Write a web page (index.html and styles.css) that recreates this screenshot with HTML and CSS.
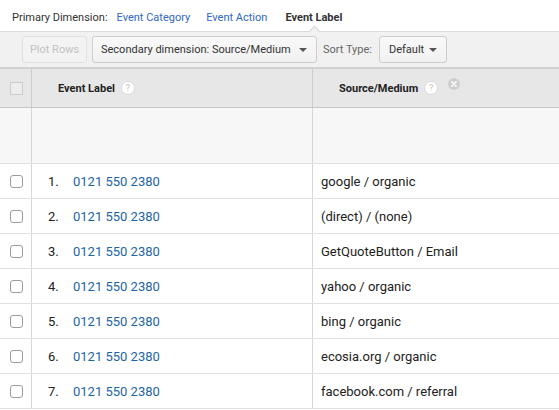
FILE: index.html
```html
<!DOCTYPE html>
<html>
<head>
<meta charset="utf-8">
<link rel="stylesheet" href="styles.css">
</head>
<body>
<div class="topbar">
  <span class="pd-label">Primary Dimension:</span>
  <a class="pd-link first">Event Category</a>
  <a class="pd-link">Event Action</a>
  <span class="pd-active">Event Label</span>
</div>
<div class="toolbar">
  <button class="btn disabled">Plot Rows</button>
  <button class="btn select">Secondary dimension: Source/Medium <span class="caret"></span></button>
  <span class="sort-label">Sort Type:</span>
  <button class="btn select sort">Default <span class="caret"></span></button>
</div>
<div class="table">
  <div class="row head">
    <div class="cell chk"><span class="hbox"></span></div>
    <div class="cell c1"><span class="htext">Event Label</span><span class="help">?</span></div>
    <div class="cell c2"><span class="htext">Source/Medium</span><span class="help">?</span><span class="remove"><svg width="12" height="12" viewBox="0 0 12 12"><circle cx="6" cy="6" r="6" fill="#cfcfcf"/><path d="M3.8 3.8 L8.2 8.2 M8.2 3.8 L3.8 8.2" stroke="#fff" stroke-width="1.4" stroke-linecap="round"/></svg></span></div>
  </div>
  <div class="row totals">
    <div class="cell chk"></div>
    <div class="cell c1"></div>
    <div class="cell c2"></div>
  </div>
  <div class="row data">
    <div class="cell chk"><span class="cbox"></span></div>
    <div class="cell c1"><span class="num">1.</span><a class="lnk">0121 550 2380</a></div>
    <div class="cell c2">google / organic</div>
  </div>
  <div class="row data">
    <div class="cell chk"><span class="cbox"></span></div>
    <div class="cell c1"><span class="num">2.</span><a class="lnk">0121 550 2380</a></div>
    <div class="cell c2">(direct) / (none)</div>
  </div>
  <div class="row data">
    <div class="cell chk"><span class="cbox"></span></div>
    <div class="cell c1"><span class="num">3.</span><a class="lnk">0121 550 2380</a></div>
    <div class="cell c2">GetQuoteButton / Email</div>
  </div>
  <div class="row data">
    <div class="cell chk"><span class="cbox"></span></div>
    <div class="cell c1"><span class="num">4.</span><a class="lnk">0121 550 2380</a></div>
    <div class="cell c2">yahoo / organic</div>
  </div>
  <div class="row data">
    <div class="cell chk"><span class="cbox"></span></div>
    <div class="cell c1"><span class="num">5.</span><a class="lnk">0121 550 2380</a></div>
    <div class="cell c2">bing / organic</div>
  </div>
  <div class="row data">
    <div class="cell chk"><span class="cbox"></span></div>
    <div class="cell c1"><span class="num">6.</span><a class="lnk">0121 550 2380</a></div>
    <div class="cell c2">ecosia.org / organic</div>
  </div>
  <div class="row data">
    <div class="cell chk"><span class="cbox"></span></div>
    <div class="cell c1"><span class="num">7.</span><a class="lnk">0121 550 2380</a></div>
    <div class="cell c2">facebook.com / referral</div>
  </div>
</div>
</body>
</html>
```
FILE: styles.css
```css
* { box-sizing: border-box; }
html, body { margin: 0; padding: 0; background: #fff; }
body {
  font-family: Roboto, "Liberation Sans", Arial, sans-serif;
  color: #222;
  width: 559px;
  overflow: hidden;
}

.topbar {
  height: 31px;
  padding: 6px 0 0 12px;
  display: flex;
  align-items: flex-start;
  font-size: 11px;
  line-height: 24px;
  position: relative;
}
.pd-label { color: #333; margin-right: 8px; }
.pd-link { color: #2f68c8; margin-right: 16px; }
.pd-link.first { margin-left: 1px; }
.pd-active { color: #333; font-weight: bold; margin-left: 2px; position: relative; }
.pd-active::after {
  content: "";
  position: absolute;
  left: 50%;
  bottom: -4px;
  width: 6px;
  height: 6px;
  margin-left: -3px;
  background: #f1f1f1;
  border-left: 1px solid #d8d8d8;
  border-top: 1px solid #d8d8d8;
  transform: rotate(45deg);
  z-index: 2;
}

.toolbar {
  height: 37px;
  background: #f1f1f1;
  border-top: 1px solid #dcdcdc;
  border-bottom: 1px solid #d3d3d3;
  padding: 4px 0 0 22px;
  display: flex;
  align-items: flex-start;
  font-size: 11px;
}
.btn {
  height: 27px;
  border: 1px solid #cdcdcd;
  border-radius: 3px;
  background: linear-gradient(#f9f9f9, #f1f1f1);
  font-family: inherit;
  font-size: 11px;
  color: #333;
  padding: 0 8px;
  display: flex;
  align-items: center;
  white-space: nowrap;
}
.btn.disabled {
  width: 65px;
  justify-content: center;
  color: #c2c2c2;
  border-color: #e0e0e0;
  background: #f3f3f3;
  margin-right: 5px;
  padding: 0;
}
.btn.select { width: 225px; padding-left: 8px; }
.btn.sort { width: 68px; padding-left: 9px; }
.caret {
  display: inline-block;
  width: 0; height: 0;
  border-left: 4px solid transparent;
  border-right: 4px solid transparent;
  border-top: 4px solid #555;
  margin-left: auto;
  margin-right: 1px;
}
.sort-label {
  color: #666;
  line-height: 27px;
  margin: 0 7px 0 6px;
}

.table { font-size: 13px; }
.row {
  display: grid;
  grid-template-columns: 32px 281px 1fr;
}
.cell {
  border-right: 1px solid #d6d6d6;
  display: flex;
  align-items: center;
}
.cell.c2 { border-right: none; }

.row.head {
  height: 40px;
  background: #e7e7e7;
  border-top: 1px solid #d0d0d0;
  border-bottom: 1px solid #c6c6c6;
}
.row.head .cell { border-right-color: #cbcbcb; }
.hbox {
  width: 13px; height: 13px;
  margin-left: 10px;
  background: #ededed;
  border: 1px solid #cdcdcd;
}
.htext {
  font-size: 11px;
  font-weight: bold;
  color: #222;
}
.row.head .c1 { padding-left: 26px; }
.row.head .c2 { padding-left: 26px; }
.help {
  width: 14px; height: 14px;
  border-radius: 50%;
  background: #fff;
  border: 1px solid #dadada;
  color: #c0c0c0;
  font-size: 9px;
  line-height: 12px;
  text-align: center;
  margin-left: 6px;
}
.remove {
  display: flex;
  margin-left: 10px;
  margin-top: -8px;
}

.row.totals {
  height: 56px;
  background: #f7f7f7;
  border-bottom: 1px solid #e0e0e0;
}
.row.data {
  height: 35px;
  border-bottom: 1px solid #e0e0e0;
}
.cbox {
  width: 13px; height: 13px;
  margin-left: 10px;
  border: 1px solid #9c9c9c;
  border-radius: 3px;
  background: #fff;
}
.row.data .c1 { padding-left: 16px; }
.num { width: 25px; color: #222; }
.lnk { color: #1c64a8; }
.row.data .c2 { padding-left: 8px; color: #222; }
```
